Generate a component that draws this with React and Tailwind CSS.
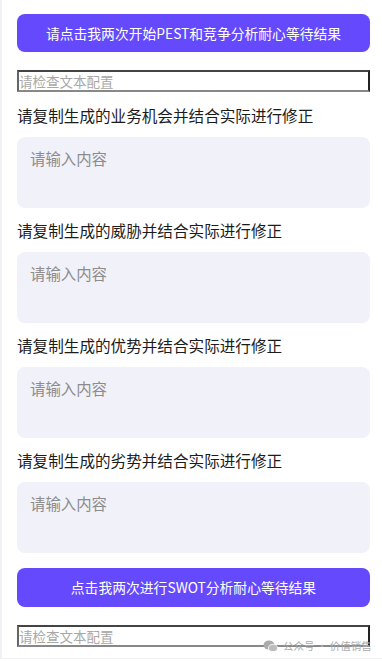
import React from 'react';

const SECTIONS = [
  '请复制生成的业务机会并结合实际进行修正',
  '请复制生成的威胁并结合实际进行修正',
  '请复制生成的优势并结合实际进行修正',
  '请复制生成的劣势并结合实际进行修正',
];

const font = { fontFamily: '"Noto Sans CJK SC", "Noto Sans", sans-serif' };

function ConfigInput() {
  return (
    <input
      readOnly
      placeholder="请检查文本配置"
      className="h-[22px] w-full border-2 border-t-[#444] border-l-[#666] border-r-[#222] border-b-[#888] bg-white px-0 text-[13.5px] leading-none text-black placeholder:text-[#a8a8a8] outline-none"
      style={font}
    />
  );
}

export default function App() {
  return (
    <div className="relative h-[659px] w-[382px] overflow-hidden border-b border-l-2 border-[#f0f0f5] bg-white" style={font}>
      <div className="flex flex-col pl-[15px] pr-[12px] pt-[14px]">
        <button
          type="button"
          className="h-[38px] w-full rounded-[8px] bg-[#6449fd] text-[13.8px] text-white"
        >
          请点击我两次开始PEST和竞争分析耐心等待结果
        </button>
        <div className="mt-[16px]">
          <ConfigInput />
        </div>

        <div className="mt-[16px] flex flex-col gap-[15px]">
          {SECTIONS.map((label) => (
            <div key={label} className="flex flex-col gap-[9px]">
              <p className="h-[20px] text-[15.6px] leading-[15px] text-[#1c1c1c]">{label}</p>
              <div className="h-[71px] rounded-[8px] bg-[#f1f1f9] px-[13px] pt-[10px] text-[15.4px] leading-[22px] text-[#8c8c8c]">
                请输入内容
              </div>
            </div>
          ))}
        </div>

        <button
          type="button"
          className="mt-[15px] h-[39px] w-full rounded-[8px] bg-[#6449fd] text-[13.8px] text-white"
        >
          点击我两次进行SWOT分析耐心等待结果
        </button>
        <div className="mt-[16px]">
          <ConfigInput />
        </div>
      </div>

      <div className="absolute left-[261px] top-[640px] flex items-center gap-[5px] text-[10.5px] leading-none text-[#ababab]">
        <svg width="15" height="12" viewBox="0 0 15 12">
          <ellipse cx="6" cy="5" rx="5.5" ry="4.5" fill="#ababab" />
          <ellipse cx="10" cy="8" rx="4.5" ry="3.6" fill="#bcbcbc" stroke="#fff" strokeWidth="0.8" />
        </svg>
        <span>公众号 · 价值销售</span>
      </div>
    </div>
  );
}
